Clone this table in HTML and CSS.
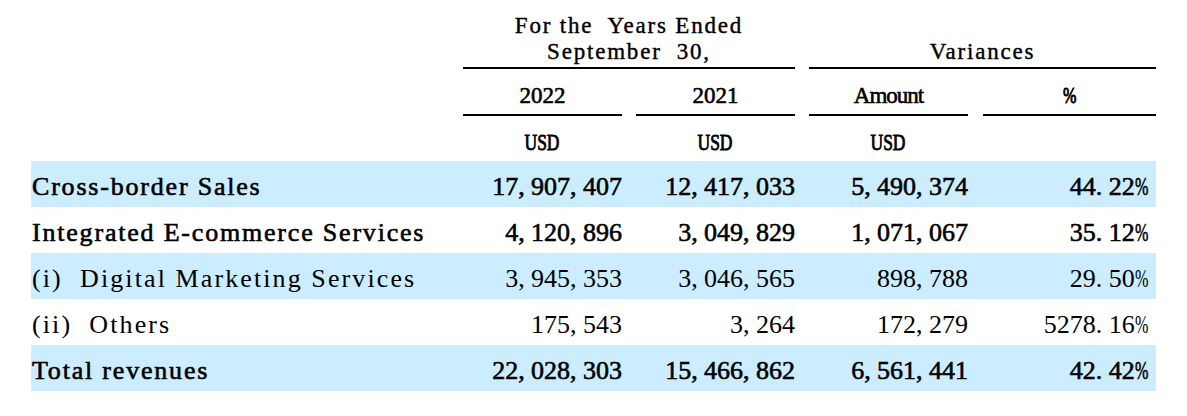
FILE: index.html
```html
<!DOCTYPE html>
<html>
<head>
<meta charset="utf-8">
<link rel="stylesheet" href="styles.css">
</head>
<body>
<div class="report">
  <div class="row head-top">
    <div class="label"></div>
    <div class="group years"><span class="pre">For the  Years Ended<br>September  30,</span></div>
    <div class="group var"><span>Variances</span></div>
  </div>
  <div class="row head-mid">
    <div class="label"></div>
    <div class="hcell"><span>2022</span></div>
    <div class="hcell"><span>2021</span></div>
    <div class="hcell"><span class="word">Amount</span></div>
    <div class="hcell last"><span class="p">%</span></div>
  </div>
  <div class="row head-unit">
    <div class="label"></div>
    <div class="ucell"><span class="unit">USD</span></div>
    <div class="ucell"><span class="unit">USD</span></div>
    <div class="ucell"><span class="unit">USD</span></div>
    <div class="ucell last"></div>
  </div>
  <div class="row data shade bold">
    <div class="label">Cross-border Sales</div>
    <div class="num">17<span class="c">,</span>907<span class="c">,</span>407</div>
    <div class="num">12<span class="c">,</span>417<span class="c">,</span>033</div>
    <div class="num">5<span class="c">,</span>490<span class="c">,</span>374</div>
    <div class="num pct">44<span class="c">.</span>22<span class="p">%</span></div>
  </div>
  <div class="row data bold">
    <div class="label">Integrated E-commerce Services</div>
    <div class="num">4<span class="c">,</span>120<span class="c">,</span>896</div>
    <div class="num">3<span class="c">,</span>049<span class="c">,</span>829</div>
    <div class="num">1<span class="c">,</span>071<span class="c">,</span>067</div>
    <div class="num pct">35<span class="c">.</span>12<span class="p">%</span></div>
  </div>
  <div class="row data shade">
    <div class="label">(i)  Digital Marketing Services</div>
    <div class="num">3<span class="c">,</span>945<span class="c">,</span>353</div>
    <div class="num">3<span class="c">,</span>046<span class="c">,</span>565</div>
    <div class="num">898<span class="c">,</span>788</div>
    <div class="num pct">29<span class="c">.</span>50<span class="p">%</span></div>
  </div>
  <div class="row data">
    <div class="label">(ii)  Others</div>
    <div class="num">175<span class="c">,</span>543</div>
    <div class="num">3<span class="c">,</span>264</div>
    <div class="num">172<span class="c">,</span>279</div>
    <div class="num pct">5278<span class="c">.</span>16<span class="p">%</span></div>
  </div>
  <div class="row data shade bold">
    <div class="label">Total revenues</div>
    <div class="num">22<span class="c">,</span>028<span class="c">,</span>303</div>
    <div class="num">15<span class="c">,</span>466<span class="c">,</span>862</div>
    <div class="num">6<span class="c">,</span>561<span class="c">,</span>441</div>
    <div class="num pct">42<span class="c">.</span>42<span class="p">%</span></div>
  </div>
</div>
</body>
</html>
```

FILE: styles.css
```css
html, body {
  margin: 0;
  padding: 0;
  background: #ffffff;
}

body {
  font-family: "Liberation Serif", "Times New Roman", serif;
  color: #000000;
}

.report {
  padding: 13px 0 0 31px;
  width: 1125px;
}

.row {
  display: grid;
  grid-template-columns: 418px 173px 173px 173px 188px;
}

/* header line 1 */
.head-top {
  font-size: 23px;
  letter-spacing: 1.8px;
  line-height: 26px;
  -webkit-text-stroke: 0.4px #000;
}
.head-top .group {
  margin-left: 14px;
  border-bottom: 2px solid #000;
  padding-bottom: 2px;
  display: flex;
  align-items: flex-end;
  justify-content: center;
  text-align: center;
}
.head-top .years { grid-column: 2 / 4; }
.head-top .var { grid-column: 4 / 6; }
.pre { white-space: pre; }

/* header line 2 */
.head-mid {
  font-size: 23px;
  line-height: 26px;
  -webkit-text-stroke: 0.6px #000;
}
.hcell {
  margin-left: 14px;
  border-bottom: 2px solid #000;
  padding: 14px 0 5px;
  text-align: center;
}
.hcell.last { margin-left: 15px; }
.word { letter-spacing: -1px; }

/* unit line */
.head-unit {
  font-size: 23px;
  line-height: 26px;
  -webkit-text-stroke: 0.9px #000;
}
.ucell {
  margin-left: 14px;
  padding: 14px 0 5px;
  text-align: center;
}
.ucell.last { margin-left: 15px; }
.unit {
  display: inline-block;
  transform: scaleX(0.76);
}

/* data rows */
.data {
  font-size: 26px;
  height: 46px;
  box-sizing: border-box;
  padding-top: 6px;
  align-items: center;
  white-space: pre;
}
.data.shade { background: #ccecff; }
.data.bold { -webkit-text-stroke: 0.6px #000; }
.data .label { padding-left: 1px; letter-spacing: 2.1px; }
.data.bold .label { letter-spacing: 1.8px; }
.num { text-align: right; }
.num .c { margin-right: 6.4px; }
.num.pct { padding-right: 8px; }

.p {
  display: inline-block;
  transform: scaleX(0.62);
  transform-origin: left center;
  margin-right: -8.4px;
}
.hcell .p {
  transform: scaleX(0.7);
  transform-origin: center;
  margin: 0;
  -webkit-text-stroke: 1px #000;
}
```
